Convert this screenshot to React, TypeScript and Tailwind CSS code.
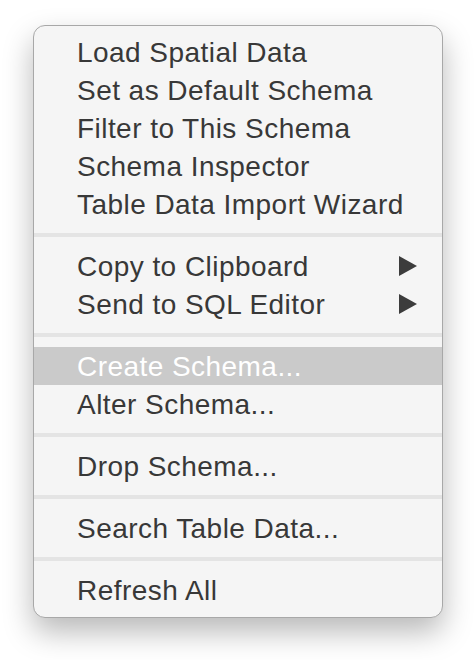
import React from "react";

type Item = { label: string; submenu?: boolean; active?: boolean };

const groups: Item[][] = [
  [
    { label: "Load Spatial Data" },
    { label: "Set as Default Schema" },
    { label: "Filter to This Schema" },
    { label: "Schema Inspector" },
    { label: "Table Data Import Wizard" },
  ],
  [
    { label: "Copy to Clipboard", submenu: true },
    { label: "Send to SQL Editor", submenu: true },
  ],
  [{ label: "Create Schema...", active: true }, { label: "Alter Schema..." }],
  [{ label: "Drop Schema..." }],
  [{ label: "Search Table Data..." }],
  [{ label: "Refresh All" }],
];

function Row({ item }: { item: Item }) {
  return (
    <div
      className={`h-[38px] flex items-center pl-[43px] pr-[25px] ${
        item.active ? "bg-[#cacaca] text-white" : "text-[#383838]"
      }`}
    >
      <span className="flex-1 leading-none pt-[1px]">{item.label}</span>
      {item.submenu && (
        <svg width="18" height="20" viewBox="0 0 18 20" className="shrink-0">
          <polygon points="0,0 18,10 0,20" fill="#3c3c3c" />
        </svg>
      )}
    </div>
  );
}

export default function App() {
  return (
    <div className="w-[476px] h-[660px] bg-white pt-[25px] pl-[33px]">
      <div
        className="w-[410px] bg-[#f5f5f5] border border-[#a8a8a8] rounded-[12px] pt-[7px] pb-[8px] shadow-[0_14px_30px_rgba(0,0,0,0.28)] text-[28px] tracking-[0.45px]"
        style={{ fontFamily: '"Liberation Sans", Arial, sans-serif' }}
      >
        {groups.map((g, i) => (
          <div key={i}>
            {i > 0 && <div className="h-[4px] bg-[#e4e4e4] my-[10px]" />}
            {g.map((item) => (
              <Row key={item.label} item={item} />
            ))}
          </div>
        ))}
      </div>
    </div>
  );
}
